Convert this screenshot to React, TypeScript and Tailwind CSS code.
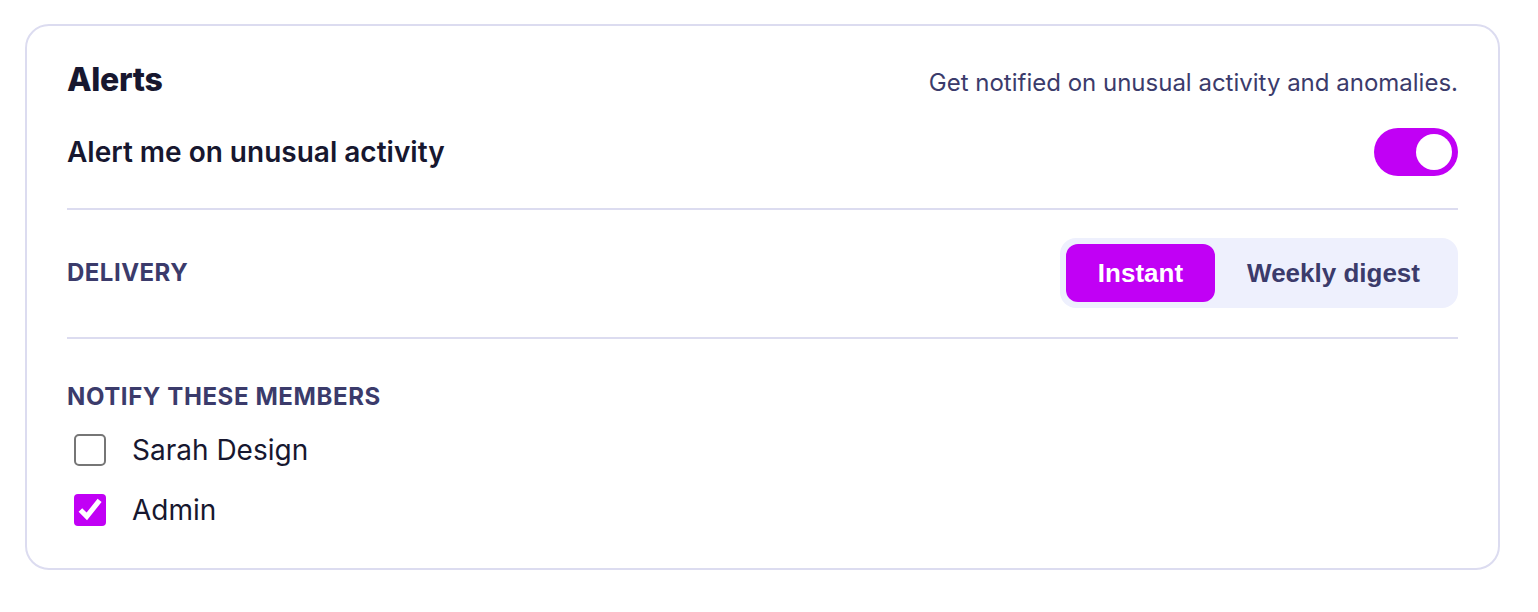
import { useState } from 'react';

const inter = { fontFamily: 'Inter, "Noto Sans", sans-serif' };

export default function App() {
  const [enabled, setEnabled] = useState(true);
  const [mode, setMode] = useState<'instant' | 'weekly'>('instant');
  const [members, setMembers] = useState({ sarah: false, admin: true });

  return (
    <div className="min-h-screen bg-white pt-[24px] pl-[25px]" style={inter}>
      <div className="w-[1475px] rounded-[24px] border-2 border-[#dcdcf0] bg-white px-10 pt-[35px] pb-[37px]">
        {/* Header */}
        <div className="flex items-baseline justify-between">
          <h2 className="text-[32px] leading-[38px] font-extrabold tracking-[-0.01em] text-[#17172f]">Alerts</h2>
          <p className="text-[24px] leading-[32px] text-[#3b3b6b]">Get notified on unusual activity and anomalies.</p>
        </div>

        {/* Toggle row */}
        <div className="mt-[29px] flex items-center justify-between pb-[32px] border-b-2 border-[#dcdcf0]">
          <span className="text-[28px] leading-[42px] font-semibold text-[#17172f]">Alert me on unusual activity</span>
          <button
            onClick={() => setEnabled(!enabled)}
            className={`flex h-[48px] w-[84px] items-center rounded-full p-[6px] ${enabled ? 'justify-end bg-[#c100f5]' : 'justify-start bg-[#d4d4e4]'}`}
          >
            <span className="h-[36px] w-[36px] rounded-full bg-white"></span>
          </button>
        </div>

        {/* Delivery */}
        <div className="flex items-center justify-between pt-[28px] pb-[29px] border-b-2 border-[#dcdcf0]">
          <span className="text-[24px] leading-[36px] font-bold uppercase tracking-[0.02em] text-[#3b3b6b]">Delivery</span>
          <div className="flex rounded-[16px] bg-[#eef0fd] p-[6px]" style={{ fontFamily: '"Liberation Sans", Arial, sans-serif' }}>
            <button
              onClick={() => setMode('instant')}
              className={`h-[58px] rounded-[12px] px-8 text-[26px] font-bold ${mode === 'instant' ? 'bg-[#c100f5] text-white' : 'text-[#3b3b6b]'}`}
            >
              Instant
            </button>
            <button
              onClick={() => setMode('weekly')}
              className={`h-[58px] rounded-[12px] px-8 text-[26px] font-bold ${mode === 'weekly' ? 'bg-[#c100f5] text-white' : 'text-[#3b3b6b]'}`}
            >
              Weekly digest
            </button>
          </div>
        </div>

        {/* Members */}
        <div className="pt-[40px]">
          <div className="text-[24px] leading-[36px] font-bold uppercase tracking-[0.025em] text-[#3b3b6b]">Notify these members</div>
          <div className="mt-[14px] flex flex-col gap-[18px]">
            <label className="flex items-center gap-[26px] pl-[7px]">
              <span className="flex h-[32px] w-[32px] items-center justify-center">
                <input
                  type="checkbox"
                  checked={members.sarah}
                  onChange={() => setMembers({ ...members, sarah: !members.sarah })}
                  className="m-0 h-4 w-4 scale-[2] accent-[#c100f5]"
                />
              </span>
              <span className="text-[28px] leading-[42px] text-[#17172f]">Sarah Design</span>
            </label>
            <label className="flex items-center gap-[26px] pl-[7px]">
              <span className="flex h-[32px] w-[32px] items-center justify-center">
                <input
                  type="checkbox"
                  checked={members.admin}
                  onChange={() => setMembers({ ...members, admin: !members.admin })}
                  className="m-0 h-4 w-4 scale-[2] accent-[#c100f5]"
                />
              </span>
              <span className="text-[28px] leading-[42px] text-[#17172f]">Admin</span>
            </label>
          </div>
        </div>
      </div>
    </div>
  );
}
